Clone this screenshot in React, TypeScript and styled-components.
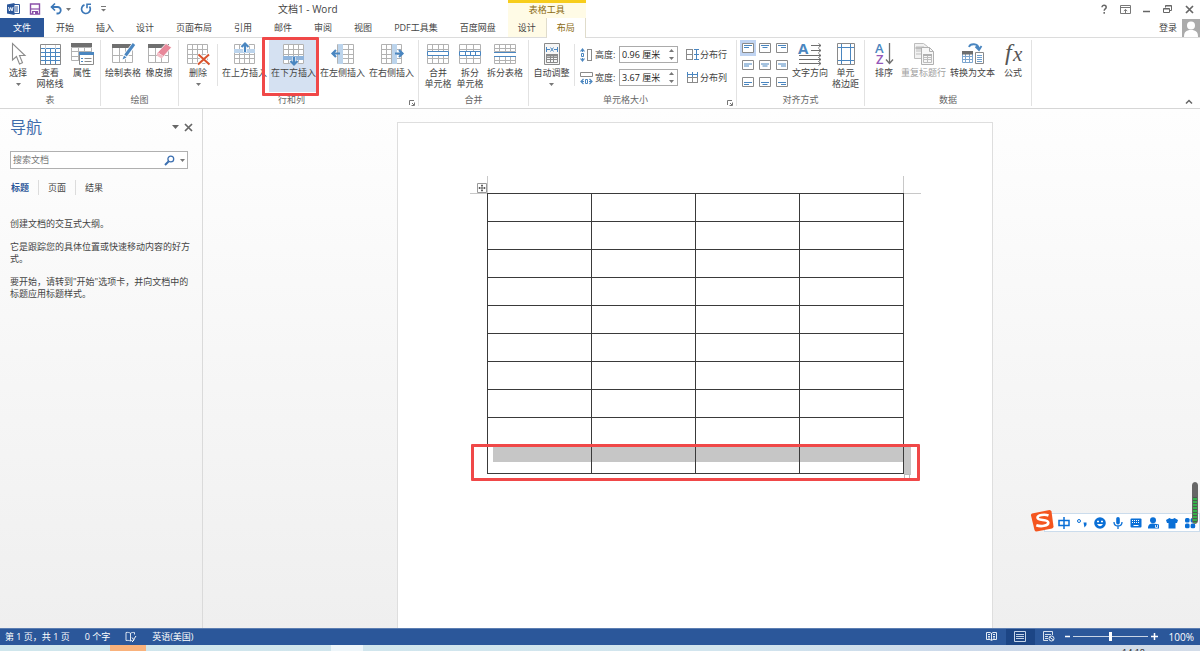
import React from "react";
import styled, { createGlobalStyle, css } from "styled-components";

const GlobalStyle = createGlobalStyle`
  *, *::before, *::after { box-sizing: border-box; }
  html, body { margin: 0; padding: 0; }
  body {
    font-family: "Open Sans", "Noto Sans CJK SC", sans-serif;
    font-size: 9px;
    line-height: 12px;
    color: #444;
    background: #fff;
  }
  button, input { font: inherit; color: inherit; padding: 0; margin: 0; border: 0; background: none; border-radius: 0; }
  svg { display: block; flex: none; overflow: visible; }
  a { color: inherit; text-decoration: none; }
`;

const GREY = "#8a8a8a";
const DARK = "#6f6f6f";
const BLUE = "#4a86c0";
const PALE = "#bcd4ec";

/* ---------- shell ---------- */
const Shell = styled.div`
  display: flex;
  flex-direction: column;
  height: 100vh;
  overflow: hidden;
  position: relative;
`;

const Header = styled.header`
  display: flex;
  height: 37px;
  flex: none;
`;
const HeaderColumn = styled.div<{ $grow?: boolean }>`
  display: flex;
  flex-direction: column;
  flex: ${(p) => (p.$grow ? "1" : "none")};
`;
const TitleRow = styled.div`
  display: flex;
  align-items: center;
  height: 18px;
`;
const QuickAccess = styled.div`
  display: flex;
  align-items: center;
  gap: 9px;
  padding-left: 7px;
`;
const IconButton = styled.button`
  display: flex;
  align-items: center;
  gap: 4px;
`;
const DocTitle = styled.h1`
  margin: 0 0 0 172px;
  font-size: 10px;
  font-weight: 400;
  line-height: 16px;
  white-space: nowrap;
`;
const TabRow = styled.nav`
  display: flex;
  height: 19px;
`;
const Tab = styled.button<{ $kind?: "file" | "active" | "context" }>`
  padding: 0 11px;
  line-height: 18px;
  white-space: nowrap;
  ${(p) => p.$kind === "file" && css`width: 44px; margin-right: 1px; background: #2b579a; color: #fff;`}
  ${(p) => p.$kind === "context" && css`flex: 1; padding: 0;`}
  ${(p) =>
    p.$kind === "active" &&
    css`
      flex: 1;
      padding: 0;
      height: 20px;
      position: relative;
      background: #fff;
      border: 1px solid #e0dccb;
      border-top: 0;
      border-bottom: 0;
      color: #8a6a12;
    `}
`;
const ContextTabs = styled(HeaderColumn)`
  width: 78px;
  margin-left: 1px;
  background: #fffbe6;
  border-top: 3px solid #f7cd1c;
`;
const ContextTitle = styled.div`
  height: 15px;
  line-height: 13px;
  text-align: center;
  color: #8a6a12;
`;
const WindowControls = styled(TitleRow)`
  justify-content: flex-end;
  gap: 11px;
  padding-right: 6px;
`;
const Account = styled.div`
  display: flex;
  justify-content: flex-end;
  align-items: center;
  gap: 5px;
  height: 19px;
`;

/* ---------- ribbon ---------- */
const Ribbon = styled.section`
  display: flex;
  flex: none;
  height: 72px;
  border-top: 1px solid #dcdcdc;
  border-bottom: 1px solid #d6d6d6;
  padding: 2px 0;
`;
const Group = styled.div<{ $w: number }>`
  display: flex;
  flex-direction: column;
  flex: none;
  width: ${(p) => p.$w}px;
  height: 66px;
  border-right: 1px solid #e2e2e2;
  position: relative;
`;
const GroupBody = styled.div<{ $pad?: number }>`
  display: flex;
  height: 52px;
  padding-left: ${(p) => p.$pad ?? 0}px;
`;
const GroupLabel = styled.div<{ $launch?: boolean }>`
  margin-top: 2px;
  padding-right: ${(p) => (p.$launch ? 14 : 0)}px;
  text-align: center;
  color: #666;
`;
const Launcher = styled.button`
  position: absolute;
  right: 3px;
  bottom: 0;
`;
const Command = styled.button<{ $w: number; $hot?: boolean; $off?: boolean }>`
  display: flex;
  flex-direction: column;
  align-items: center;
  flex: none;
  width: ${(p) => p.$w}px;
  height: 52px;
  padding-top: 2px;
  line-height: 11px;
  white-space: nowrap;
  position: relative;
  background: ${(p) => (p.$hot ? "#d5e1f2" : "transparent")};
  color: ${(p) => (p.$off ? "#a0a0a0" : "#444")};
`;
const CommandText = styled.span`
  margin-top: 1px;
  white-space: pre;
`;
const MenuCaret = styled.span`
  margin-top: 5px;
`;
const Divider = styled.span`
  flex: none;
  width: 1px;
  height: 42px;
  margin: 4px 2px 0 1px;
  background: #e2e2e2;
`;
const Callout = styled.div`
  position: absolute;
  border: 3px solid #f04848;
  border-radius: 1px;
  pointer-events: none;
  z-index: 3;
`;
const CommandCallout = styled(Callout)`
  inset: -3px -1px -4px -7px;
`;

const FieldStack = styled.div`
  display: flex;
  flex-direction: column;
  gap: 6px;
  padding: 6px 0 0 3px;
`;
const Field = styled.div`
  display: flex;
  align-items: center;
  gap: 2px;
  height: 17px;
`;
const FieldLabel = styled.label`
  width: 22px;
  white-space: nowrap;
`;
const Spinner = styled.div`
  display: flex;
  align-items: center;
  width: 59px;
  height: 17px;
  border: 1px solid #ababab;
`;
const SizeInput = styled.input`
  flex: 1;
  min-width: 0;
  padding-left: 2px;
  color: #222;
  outline: 0;
`;
const SpinButtons = styled.div`
  display: flex;
  flex-direction: column;
  gap: 5px;
  width: 11px;
  align-items: center;
`;
const Distribute = styled.button`
  display: flex;
  align-items: center;
  gap: 1px;
  height: 17px;
  white-space: nowrap;
`;
const AlignGrid = styled.div`
  display: grid;
  grid-template-columns: repeat(3, 16px);
  grid-auto-rows: 16px;
  gap: 1px;
  margin-right: 1px;
`;
const AlignButton = styled.button<{ $on: boolean }>`
  display: flex;
  align-items: center;
  justify-content: center;
  background: ${(p) => (p.$on ? "#c0d4f2" : "transparent")};
`;
const Collapse = styled.button`
  margin: auto 7px 2px auto;
`;

/* ---------- workspace ---------- */
const Workspace = styled.main`
  display: flex;
  flex: 1;
  min-height: 0;
  overflow: hidden;
  background: linear-gradient(#fefefe, #efefef);
`;
const NavPane = styled.aside`
  flex: none;
  width: 203px;
  padding: 8px 14px 0 10px;
  border-right: 1px solid #dadada;
`;
const NavHead = styled.div`
  display: flex;
  align-items: center;
  gap: 5px;
  height: 20px;
  margin-right: -5px;
`;
const NavTitle = styled.h2`
  flex: 1;
  margin: 0;
  font-size: 16px;
  font-weight: 400;
  line-height: 22px;
  color: #3f6cab;
`;
const SearchBox = styled.div`
  display: flex;
  align-items: center;
  gap: 5px;
  height: 18px;
  margin-top: 14px;
  padding-right: 2px;
  border: 1px solid #b0b0b0;
  background: #fff;
`;
const SearchInput = styled.input`
  flex: 1;
  min-width: 0;
  padding-left: 2px;
  outline: 0;
  &::placeholder { color: #777; opacity: 1; }
`;
const NavTabs = styled.div`
  display: flex;
  height: 15px;
  margin-top: 11px;
`;
const NavTab = styled.button<{ $on?: boolean }>`
  padding: 0 9px;
  border-right: 1px solid #dcdcdc;
  color: ${(p) => (p.$on ? "#2b579a" : "#444")};
  font-weight: ${(p) => (p.$on ? 700 : 400)};
  &:first-child { padding-left: 1px; }
  &:last-child { border-right: 0; }
`;
const NavText = styled.div`
  display: flex;
  flex-direction: column;
  gap: 11px;
  margin: 23px -4px 0 0;
  p { margin: 0; }
`;
const Canvas = styled.div`
  display: flex;
  flex: 1;
  justify-content: center;
  padding: 13px 13px 0 0;
`;
const Paper = styled.article`
  width: 596px;
  padding: 70px 88px 0 89px;
  background: #fff;
  border: 1px solid #dedede;
  border-bottom: 0;
`;
const TableFrame = styled.div`
  position: relative;
`;
const DocTable = styled.table`
  position: relative;
  z-index: 1;
  width: 100%;
  table-layout: fixed;
  border-collapse: collapse;
  td { height: 28px; padding: 0; border: 1px solid #3a3a3a; }
`;
const CropMark = styled.span<{ $right?: boolean }>`
  position: absolute;
  top: -17px;
  width: 18px;
  height: 18px;
  border-bottom: 1px solid #c8c8c8;
  ${(p) =>
    p.$right
      ? css`right: -17px; border-left: 1px solid #c8c8c8;`
      : css`left: -17px; border-right: 1px solid #c8c8c8;`}
`;
const MoveHandle = styled.span`
  position: absolute;
  left: -10px;
  top: -10px;
`;
const RowSelection = styled.span`
  position: absolute;
  left: 6px;
  right: 0;
  bottom: 12px;
  height: 16px;
  background: #c6c6c6;
`;
const RowEndMark = styled.span`
  position: absolute;
  right: -7px;
  bottom: -1px;
  width: 7px;
  height: 29px;
  background: #c6c6c6;
`;
const ResizeHandle = styled.span`
  position: absolute;
  right: -6px;
  bottom: -6px;
  width: 6px;
  height: 6px;
  border: 1px solid #bbb;
  background: #fff;
`;
const RowCallout = styled(Callout)`
  left: -16px;
  right: -16px;
  bottom: -7px;
  height: 37px;
`;

/* ---------- status bar and taskbar ---------- */
const StatusBar = styled.footer`
  display: flex;
  align-items: center;
  flex: none;
  height: 17px;
  padding: 0 6px 1px 5px;
  background: #2b579a;
  border-top: 1px solid #5c7eb2;
  color: #fff;
  white-space: nowrap;
`;
const StatusItems = styled.div`
  display: flex;
  align-items: center;
  gap: 15px;
  flex: 1;
`;
const ViewButton = styled.button<{ $on?: boolean }>`
  display: flex;
  align-items: center;
  justify-content: center;
  width: 29px;
  height: 16px;
  background: ${(p) => (p.$on ? "#1c4585" : "transparent")};
`;
const ZoomControl = styled.div`
  display: flex;
  align-items: center;
  gap: 3px;
  margin-left: 1px;
`;
const ZoomSlider = styled.input`
  appearance: none;
  width: 75px;
  height: 9px;
  &::-webkit-slider-runnable-track { height: 1px; background: #c9d5e6; }
  &::-webkit-slider-thumb { appearance: none; width: 3px; height: 9px; margin-top: -4px; background: #fff; border: 0; }
`;
const ZoomValue = styled.span`
  margin-left: 8px;
  font-size: 10px;
`;
const Taskbar = styled.div`
  display: flex;
  flex: none;
  height: 6px;
  overflow: hidden;
  background: linear-gradient(90deg, #cfe6ec, #d2e5ee 60%, #ccd9ea 80%, #d3dce8);
`;
const TaskItem = styled.span<{ $hot?: boolean }>`
  flex: none;
  width: ${(p) => (p.$hot ? 36 : 32)}px;
  margin-left: ${(p) => (p.$hot ? 110 : 185)}px;
  background: ${(p) => (p.$hot ? "#f9b27c" : "#eef6fa")};
`;
const Clock = styled.time`
  margin: 2px 55px 0 auto;
  font-size: 9px;
  line-height: 12px;
  color: #222;
`;

/* ---------- floating input bar ---------- */
const InputBar = styled.div`
  position: absolute;
  right: 0;
  bottom: 119px;
  display: flex;
  align-items: center;
  gap: 6px;
  width: 156px;
  height: 19px;
  padding-left: 13px;
  background: #fff;
  border: 1px solid #cbdcec;
  z-index: 4;
`;
const InputLogo = styled.span`
  position: absolute;
  left: -15px;
  top: -5px;
`;
const Meter = styled.div`
  position: absolute;
  right: 2px;
  bottom: 127px;
  width: 6px;
  height: 42px;
  border-radius: 3px;
  background: linear-gradient(#666 14px, transparent 14px), repeating-linear-gradient(#35b04a 0 2px, #4a5a4d 2px 3px);
  border: 1px solid #666;
  z-index: 5;
`;

/* ---------- icons ---------- */
function Svg({ w = 24, h = 24, children }: { w?: number; h?: number; children: React.ReactNode }) {
  return (
    <svg width={w} height={h} viewBox={`0 0 ${w} ${h}`} fill="none" aria-hidden="true">
      {children}
    </svg>
  );
}
function Lattice({ x, y, w, h, c, r, s = "#b2b2b2" }: { x: number; y: number; w: number; h: number; c: number; r: number; s?: string }) {
  let d = `M${x} ${y}h${w}v${h}h${-w}z`;
  for (let i = 1; i < c; i++) d += `M${x + Math.round((i * w) / c)} ${y}v${h}`;
  for (let i = 1; i < r; i++) d += `M${x} ${y + Math.round((i * h) / r)}h${w}`;
  return <path d={d} stroke={s} />;
}
const Caret = () => (
  <Svg w={5} h={3}><path d="M0 0h5L2.500 3z" fill="#777" /></Svg>
);
const WordIcon = () => (
  <Svg w={13} h={12}>
    <path d="M6.500 1.500h6v9h-6z" fill="#fff" stroke="#2b579a" />
    <path d="M8 4h3M8 6h3M8 8h3" stroke="#2b579a" />
    <path d="M0 1.500L7.500 0v12L0 10.500z" fill="#2b579a" />
    <path d="M1.500 4l1 4 1.200-3.500L5 8l1-4" stroke="#fff" strokeWidth=".9" />
  </Svg>
);
const SaveIcon = () => (
  <Svg w={12} h={12}>
    <path d="M1.500 1h9v10h-9z" stroke="#8a50a8" strokeWidth="1.400" />
    <path d="M1 6h10" stroke="#8a50a8" strokeWidth="1.200" />
    <path d="M3 8h6v3H3z" fill="#8a50a8" />
    <path d="M4.500 9H6v2H4.500z" fill="#fff" />
  </Svg>
);
const UndoIcon = () => (
  <Svg w={12} h={12}>
    <path d="M1.500 4h6a3 3 0 0 1 0 6.500H6.500" stroke="#3c78b8" strokeWidth="1.800" />
    <path d="M5 .5L1.500 4 5 7.500" stroke="#3c78b8" strokeWidth="1.700" />
  </Svg>
);
const RedoIcon = () => (
  <Svg w={12} h={12}>
    <path d="M4.500 1.900A4.400 4.400 0 1 0 9.500 3.500" stroke="#3c78b8" strokeWidth="1.700" />
    <path d="M11 1.200H7v4" stroke="#3c78b8" strokeWidth="1.600" />
  </Svg>
);
const MoreIcon = () => (
  <Svg w={5} h={6}><path d="M0 .5h5" stroke="#777" /><path d="M0 3h5L2.500 5.500z" fill="#777" /></Svg>
);
const SelectIcon = () => (
  <Svg><path d="M6.500 1.500v16.500l4-3.500 3 7.500 3-1.300-3-7.200h5.500z" fill="#fff" stroke="#8c8c8c" strokeWidth="1.100" /></Svg>
);
const GridlinesIcon = () => (
  <Svg>
    <Lattice x={2.5} y={6.5} w={20} h={16} c={4} r={4} s="#4a86c0" />
    <path d="M7.500 2v5M17.500 2v5" stroke="#d0d0d0" />
    <path d="M2.500 22.500v-20h20v20z" stroke={GREY} />
  </Svg>
);
const PropertiesIcon = () => (
  <Svg>
    <Lattice x={1.5} y={5.5} w={20} h={13} c={3} r={3} />
    <path d="M1 1h21v4H1z" fill={DARK} />
    <path d="M9.500 10.500h14v12h-14z" fill="#fff" stroke={GREY} />
    <path d="M9 10h15v3H9z" fill={BLUE} />
    <path d="M11 16.500h2M11 19.500h2" stroke={BLUE} /><path d="M14.500 16.500h7M14.500 19.500h7" stroke={GREY} />
  </Svg>
);
const DrawTableIcon = () => (
  <Svg>
    <Lattice x={1.5} y={5.5} w={20} h={15} c={3} r={2} />
    <path d="M1 2h21v4H1z" fill={DARK} />
    <path d="M10 19l2-6L21 1l4 3-10 13z" fill="#fff" />
    <path d="M11.500 17.500l1.500-4 2.500 2z" fill={BLUE} />
    <path d="M14.500 13.500L23 2" stroke={BLUE} strokeWidth="3" />
  </Svg>
);
const EraserIcon = () => (
  <Svg>
    <Lattice x={1.5} y={5.5} w={20} h={15} c={3} r={2} />
    <path d="M1 2h21v4H1z" fill={DARK} />
    <path d="M10.500 10.500L19 1.500l5.500 4-8 9z" fill="#e8889a" stroke="#fff" strokeWidth=".8" />
    <path d="M10.500 10.500l6 4-2 2-5-3z" fill="#f3bcc5" />
  </Svg>
);
const DeleteIcon = () => (
  <Svg>
    <Lattice x={1.5} y={2.5} w={20} h={19} c={4} r={4} />
    <path d="M12.500 12.500l11 10M23 12.500l-11 10" stroke="#fff" strokeWidth="4" />
    <path d="M12.500 12.500l11 10M23 12.500l-11 10" stroke="#d9532c" strokeWidth="2" />
  </Svg>
);
const InsertAboveIcon = () => (
  <Svg>
    <Lattice x={1.5} y={2.5} w={20} h={19} c={4} r={4} />
    <path d="M1 7h21v4H1z" fill={PALE} />
    <path d="M12 10V2M8.500 5L12 1.500 15.500 5" stroke="#fff" strokeWidth="4" />
    <path d="M12 10V2M8.500 5L12 1.500 15.500 5" stroke={BLUE} strokeWidth="2.200" />
  </Svg>
);
const InsertBelowIcon = () => (
  <Svg>
    <path d="M1 2h21v20H1z" fill="#fff" />
    <Lattice x={1.5} y={2.5} w={20} h={19} c={4} r={4} />
    <path d="M1 14h21v4H1z" fill="#8fb4dc" />
    <path d="M12 15v7M8.500 19L12 22.500 15.500 19" stroke="#d5e1f2" strokeWidth="4" />
    <path d="M12 15v7M8.500 19L12 22.500 15.500 19" stroke={BLUE} strokeWidth="2.200" />
  </Svg>
);
const InsertLeftIcon = () => (
  <Svg>
    <Lattice x={6.5} y={2.5} w={16} h={19} c={3} r={4} />
    <path d="M7 2h5v20H7z" fill={PALE} />
    <path d="M9 11.500H2M5 8l-3.500 3.500L5 15" stroke={BLUE} strokeWidth="2.200" />
  </Svg>
);
const InsertRightIcon = () => (
  <Svg>
    <Lattice x={1.5} y={2.5} w={20} h={19} c={4} r={4} />
    <path d="M12 2h5v20h-5z" fill={PALE} />
    <path d="M15 11.500h7M19 8l3.500 3.500L19 15" stroke={BLUE} strokeWidth="2.200" />
  </Svg>
);
const MergeIcon = () => (
  <Svg>
    <Lattice x={1.5} y={2.5} w={21} h={19} c={4} r={4} />
    <path d="M1.500 9.500h21v4h-21z" fill="#fff" stroke={BLUE} />
  </Svg>
);
const SplitIcon = () => (
  <Svg>
    <Lattice x={1.5} y={2.5} w={21} h={19} c={3} r={4} />
    <path d="M1.500 9.500h21v4h-21z" fill="#fff" stroke={BLUE} />
    <path d="M7.500 10v3M12.500 10v3M17.500 10v3" stroke={BLUE} />
  </Svg>
);
const SplitTableIcon = () => (
  <Svg>
    <Lattice x={1.5} y={2.5} w={21} h={7} c={4} r={2} />
    <Lattice x={1.5} y={14.5} w={21} h={7} c={4} r={2} />
    <path d="M1 10.500h22M1 14.500h22" stroke={BLUE} />
  </Svg>
);
const AutoFitIcon = () => (
  <Svg>
    <path d="M4.500 1.500h15v21h-15z" stroke={GREY} fill="#f6f6f6" />
    <path d="M6.500 5v5M17.500 5v5M7 7.500h3M14 7.500h3" stroke={BLUE} />
    <path d="M10.500 5.500l3 4M13.500 5.500l-3 4" stroke={BLUE} />
    <Lattice x={6.5} y={12.5} w={11} h={8} c={3} r={3} s={GREY} /><path d="M6 12h12v2.500H6z" fill={GREY} />
  </Svg>
);
const HeightIcon = () => (
  <Svg w={13} h={14}>
    <path d="M2.500 1v3M2.500 10v3M.5 3.500l2-2.500 2 2.500M.5 10.500l2 2.500 2-2.500" stroke={BLUE} strokeWidth="1.200" />
    <path d="M1.500 5.500h2v3h-2z" stroke={BLUE} />
    <path d="M7 1.500h5M7.500 1v12M12 12.500H7M11.500 1v12" stroke={GREY} />
  </Svg>
);
const WidthIcon = () => (
  <Svg w={13} h={14}>
    <path d="M.5 1.500h12v4H.5z" stroke={GREY} />
    <path d="M3.500 8L1 10.500 3.500 13M9.500 8l2.500 2.500L9.500 13M1 10.500h3M9 10.500h3" stroke={BLUE} strokeWidth="1.200" />
    <path d="M5.500 8.500h2v4h-2z" stroke={BLUE} />
  </Svg>
);
const RowsIcon = () => (
  <Svg w={13} h={13}>
    <path d="M.5 1v11M6.500 1v11M.5 1.500h6M.5 6.500h6M.5 11.500h6" stroke={GREY} />
    <path d="M10.500 2v9M8 1.500h5M8 6.500h5M8 11.500h5" stroke={BLUE} />
  </Svg>
);
const ColumnsIcon = () => (
  <Svg w={13} h={13}>
    <path d="M1 6.500h11M1 11.500h11M1.500 6v6M6.500 6v6M11.500 6v6" stroke={GREY} />
    <path d="M1 3.500h11M1.500 1v5M6.500 1v5M11.500 1v5" stroke={BLUE} />
  </Svg>
);
const LauncherIcon = () => (
  <Svg w={6} h={6}><path d="M.5 5V.5H5M3 3l2 2M5.500 2.500v3h-3" stroke="#777" /></Svg>
);
function AlignIcon({ row, col }: { row: number; col: number }) {
  const y = 2.5 + row * 1.5;
  const x = col === 0 ? 2 : col === 1 ? 3.5 : 5;
  return (
    <Svg w={12} h={10}>
      <path d="M.5 .5h11v9H.5z" fill="#fff" stroke={GREY} />
      <path d={`M2 ${y}h8M${x} ${y + 2}h5`} stroke={BLUE} />
    </Svg>
  );
}
const DirectionIcon = () => (
  <Svg w={26}>
    <text x="1" y="12" fontFamily="Open Sans" fontWeight="700" fontSize="15" fill={BLUE}>A</text>
    <path d="M14 3.500h10M14 8.500h10M2 13.500h22M2 17.500h22M2 21.500h22M21.500 1.500l2.500 2-2.500 2M21.500 6.500l2.500 2-2.500 2M21.500 11.500l2.500 2-2.500 2M21.500 15.500l2.500 2-2.500 2M21.500 19.500l2.500 2-2.500 2" stroke={DARK} />
  </Svg>
);
const MarginsIcon = () => (
  <Svg>
    <path d="M3.500 1.500h17v21h-17z" stroke={GREY} />
    <path d="M7.500 2v20M16.500 2v20M4 5.500h16M4 18.500h16" stroke={BLUE} />
  </Svg>
);
const SortIcon = () => (
  <Svg>
    <text x="3" y="11" fontFamily="Open Sans" fontWeight="600" fontSize="13" fill={BLUE}>A</text>
    <text x="4" y="22" fontFamily="Open Sans" fontWeight="600" fontSize="13" fill="#9457b8">Z</text>
    <path d="M17.500 1v20M14 17.500l3.500 4 3.500-4" stroke={DARK} strokeWidth="1.300" />
  </Svg>
);
const RepeatIcon = () => (
  <Svg>
    <path d="M2.500 1.500h9l4 3v12h-13z" fill="#f2f2f2" stroke="#bdbdbd" />
    <path d="M4 5h8v2H4zM4 9h5M4 12h5" fill="#bdbdbd" stroke="#bdbdbd" />
    <path d="M9.500 5.500h8l4 4v13h-12z" fill="#f7f7f7" stroke="#b0b0b0" />
    <path d="M17.500 5.500v4h4" stroke="#b0b0b0" />
    <Lattice x={11.5} y={12.5} w={8} h={8} c={2} r={3} s="#bdbdbd" /><path d="M11 12h9v2h-9z" fill="#b0b0b0" />
  </Svg>
);
const ConvertIcon = () => (
  <Svg>
    <Lattice x={1.5} y={11.5} w={10} h={9} c={3} r={3} s="#7ea6cf" />
    <path d="M1 9h11v3.500H1z" fill={DARK} />
    <path d="M14.500 10.500h8v11h-8z" fill="#fff" stroke={GREY} />
    <path d="M16 13.500h5M16 15.500h5M16 17.500h5M16 19.500h5" stroke={BLUE} strokeWidth=".8" />
    <path d="M8 5c1-3.500 9-4.500 10 2M14.500 4.500L18 8l2.500-4" stroke={BLUE} strokeWidth="1.800" />
  </Svg>
);
const FormulaIcon = () => (
  <Svg>
    <text x="4" y="18" fontFamily="Liberation Serif" fontStyle="italic" fontSize="24" fill="#555">f</text>
    <text x="12" y="19" fontFamily="Liberation Serif" fontStyle="italic" fontSize="21" fill="#555">x</text>
  </Svg>
);
const AvatarIcon = () => (
  <Svg w={18} h={18}>
    <path d="M0 0h18v18H0z" fill="#ababab" />
    <circle cx="9" cy="6.500" r="4" fill="#fff" />
    <path d="M2 18c0-5 2-7 7-7s7 2 7 7z" fill="#fff" />
  </Svg>
);
const SearchIcon = () => (
  <Svg w={11} h={11}>
    <circle cx="6.800" cy="4" r="2.900" stroke="#3c6fb0" strokeWidth="1.300" />
    <path d="M4.500 6.500L1 10" stroke="#3c6fb0" strokeWidth="2" />
  </Svg>
);
const CloseIcon = () => (
  <Svg w={9} h={9}><path d="M1 1l7 7M8 1L1 8" stroke="#666" strokeWidth="1.700" /></Svg>
);
const ProofIcon = () => (
  <Svg w={12} h={12}>
    <path d="M5.500 2v8C4 9.300 2.500 9.300 1 9.500v-8c2-.3 3.500 0 4.500.8 1-.8 2.500-1 4-.8v2M5.500 10c.8-.5 1.500-.7 2-.7" stroke="#dde6f2" />
    <path d="M7 6.500l1.500 2L11 5M7 11l2.500-2.500" stroke="#fff" />
  </Svg>
);
const ReadIcon = () => (
  <Svg w={11} h={11}>
    <path d="M.5 1.500h3.500l1.500 1 1.500-1h3.500v7H7l-1.500 1-1.500-1H.5zM5.500 2v7M2 3.500h2M2 5.500h2M2 7h2M7 3.500h2M7 5.500h2M7 7h2" stroke="#e3ebf5" />
  </Svg>
);
const PrintIcon = () => (
  <Svg w={12} h={11}><path d="M.5 .5h11v10H.5zM2 3.500h8M2 5.500h8M2 7.500h8" stroke="#c5d4e8" /></Svg>
);
const WebIcon = () => (
  <Svg w={12} h={11}>
    <path d="M5 9.500H.5v-9h9V4M2 3.500h6M2 5.500h3M2 7.500h3" stroke="#d4dfed" />
    <circle cx="8.500" cy="7.500" r="2.500" stroke="#e8eff7" /><path d="M6.500 6l4 3" stroke="#e8eff7" />
  </Svg>
);
const SogouLogo = () => (
  <Svg w={25} h={24}>
    <path d="M2 4.500L19.500 1q1.500 0 2 1.500l2 15q0 1.500-1.500 2L6.500 22.500q-1.500 0-2-1.500L1 6.500q-.3-1.500 1-2z" fill="#f4551f" />
    <path d="M18.500 6.500c-4-1.500-11-.5-11 2.200 0 3.300 10.500 1.300 10.800 4.800.2 3.500-7.500 4.500-12 2.700" stroke="#fff" strokeWidth="2.600" />
  </Svg>
);

const IB = "#0a6fd6";
const inputIcons: [string, React.ReactNode][] = [
  ["中文", <path key="a" d="M1 3.500h10v5H1zM6 0v12" stroke={IB} strokeWidth="1.500" />],
  ["标点", <g key="b"><circle cx="3" cy="4" r="1.500" stroke={IB} /><path d="M7.500 5.500h3V8L8.500 10.500" fill={IB} /></g>],
  ["表情", <g key="c"><circle cx="6" cy="6" r="5.800" fill={IB} /><path d="M3 4.500h2M7 4.500h2" stroke="#fff" strokeWidth="1.500" /><path d="M3 7q3 4.500 6 0z" fill="#fff" /></g>],
  ["语音", <g key="d"><rect x="4.200" y="0" width="3.600" height="7.500" rx="1.800" fill={IB} /><path d="M2 5q0 4 4 4t4-4M6 9v3" stroke={IB} strokeWidth="1.300" /></g>],
  ["键盘", <g key="e"><rect x=".5" y="1.500" width="11" height="9" rx="1" fill={IB} /><path d="M2 3.500h8M2 5.500h8" stroke="#fff" strokeDasharray="1 1" /><path d="M3.500 8.500h5" stroke="#fff" /></g>],
  ["用户", <g key="f"><circle cx="5" cy="3.200" r="3" fill={IB} /><path d="M0 11.500C0 7.500 2 6.500 5 6.500s4 1 6 1v4z" fill={IB} /><path d="M7.500 8v2.500h2V8" stroke="#fff" strokeWidth=".8" /></g>],
  ["皮肤", <path key="g" d="M3.500 1q2.500 2 5 0L12 3l-1 3H9.500v5.500h-7V6H1L0 3z" fill={IB} />],
  ["工具", <g key="h" fill={IB}><rect x="1" y="1" width="4.600" height="4.600" rx="1.500" /><rect x="6.600" y="1" width="4.600" height="4.600" rx="1.500" /><rect x="1" y="6.600" width="4.600" height="4.600" rx="1.500" /><rect x="6.600" y="6.600" width="4.600" height="4.600" rx="1.500" /></g>],
];

/* ---------- ribbon parts ---------- */
type CmdProps = { w: number; icon: React.ReactNode; text: string; menu?: boolean; hot?: boolean; off?: boolean; children?: React.ReactNode };
function Cmd({ w, icon, text, menu, hot, off, children }: CmdProps) {
  return (
    <Command type="button" $w={w} $hot={hot} $off={off} aria-disabled={off}>
      {icon}
      <CommandText>{text}</CommandText>
      {menu && <MenuCaret><Caret /></MenuCaret>}
      {children}
    </Command>
  );
}
const LaunchButton = ({ name }: { name: string }) => (
  <Launcher type="button" aria-label={name}><LauncherIcon /></Launcher>
);
function SizeField({ id, label, value, icon }: { id: string; label: string; value: string; icon: React.ReactNode }) {
  return (
    <Field>
      {icon}
      <FieldLabel htmlFor={id}>{label}</FieldLabel>
      <Spinner>
        <SizeInput id={id} type="text" defaultValue={value} />
        <SpinButtons>
          <button type="button" aria-label="增加"><Svg w={5} h={3}><path d="M0 3h5L2.500 0z" fill="#777" /></Svg></button>
          <button type="button" aria-label="减少"><Caret /></button>
        </SpinButtons>
      </Spinner>
    </Field>
  );
}

const mainTabs = ["开始", "插入", "设计", "页面布局", "引用", "邮件", "审阅", "视图", "PDF工具集", "百度网盘"];

export default function App() {
  return (
    <Shell lang="zh-CN">
      <GlobalStyle />
      <Header>
        <HeaderColumn>
          <TitleRow>
            <QuickAccess>
              <WordIcon />
              <IconButton type="button" aria-label="保存"><SaveIcon /></IconButton>
              <IconButton type="button" aria-label="撤消"><UndoIcon /><Caret /></IconButton>
              <IconButton type="button" aria-label="恢复"><RedoIcon /></IconButton>
              <IconButton type="button" aria-label="自定义"><MoreIcon /></IconButton>
            </QuickAccess>
            <DocTitle>文档1 - Word</DocTitle>
          </TitleRow>
          <TabRow>
            <Tab type="button" $kind="file">文件</Tab>
            {mainTabs.map((t) => <Tab type="button" key={t}>{t}</Tab>)}
          </TabRow>
        </HeaderColumn>
        <ContextTabs>
          <ContextTitle>表格工具</ContextTitle>
          <TabRow>
            <Tab type="button" $kind="context">设计</Tab>
            <Tab type="button" $kind="active">布局</Tab>
          </TabRow>
        </ContextTabs>
        <HeaderColumn $grow>
          <WindowControls>
            <IconButton type="button" aria-label="帮助"><Svg w={10} h={10}><path d="M3 3.200C3 .5 7.200.700 7.200 3.200 7.200 5 5.200 4.800 5.200 6.700M5.200 8v1.800" stroke="#666" strokeWidth="1.500" /></Svg></IconButton>
            <IconButton type="button" aria-label="功能区显示选项"><Svg w={11} h={9}><path d="M.5 .5h10v8H.5zM1 2.500h9M5.500 8V4.500M3.800 6l1.700-1.500L7.200 6" stroke="#777" /></Svg></IconButton>
            <IconButton type="button" aria-label="最小化"><Svg w={10} h={9}><path d="M1 6.500h7" stroke="#666" strokeWidth="1.500" /></Svg></IconButton>
            <IconButton type="button" aria-label="还原"><Svg w={11} h={9}><path d="M2.500 2.500v-2h6v5h-2M.5 3.500h6v4h-6zM2.500 1h6M.5 4h6" stroke="#666" /></Svg></IconButton>
            <IconButton type="button" aria-label="关闭"><CloseIcon /></IconButton>
          </WindowControls>
          <Account><a href="#login">登录</a><AvatarIcon /></Account>
        </HeaderColumn>
      </Header>

      <Ribbon>
        <Group $w={101}>
          <GroupBody $pad={2}>
            <Cmd w={32} icon={<SelectIcon />} text="选择" menu />
            <Cmd w={32} icon={<GridlinesIcon />} text={"查看\n网格线"} />
            <Cmd w={32} icon={<PropertiesIcon />} text="属性" />
          </GroupBody>
          <GroupLabel>表</GroupLabel>
        </Group>
        <Group $w={78}>
          <GroupBody $pad={3}>
            <Cmd w={38} icon={<DrawTableIcon />} text="绘制表格" />
            <Cmd w={34} icon={<EraserIcon />} text="橡皮擦" />
          </GroupBody>
          <GroupLabel>绘图</GroupLabel>
        </Group>
        <Group $w={240}>
          <GroupBody $pad={1}>
            <Cmd w={36} icon={<DeleteIcon />} text="删除" menu />
            <Divider />
            <Cmd w={49} icon={<InsertAboveIcon />} text="在上方插入" />
            <Cmd w={49} icon={<InsertBelowIcon />} text="在下方插入" hot><CommandCallout /></Cmd>
            <Cmd w={49} icon={<InsertLeftIcon />} text="在左侧插入" />
            <Cmd w={49} icon={<InsertRightIcon />} text="在右侧插入" />
          </GroupBody>
          <GroupLabel $launch>行和列</GroupLabel>
          <LaunchButton name="行和列选项" />
        </Group>
        <Group $w={110}>
          <GroupBody $pad={3}>
            <Cmd w={32} icon={<MergeIcon />} text={"合并\n单元格"} />
            <Cmd w={32} icon={<SplitIcon />} text={"拆分\n单元格"} />
            <Cmd w={38} icon={<SplitTableIcon />} text="拆分表格" />
          </GroupBody>
          <GroupLabel>合并</GroupLabel>
        </Group>
        <Group $w={208}>
          <GroupBody $pad={1}>
            <Cmd w={43} icon={<AutoFitIcon />} text="自动调整" menu />
            <Divider />
            <FieldStack>
              <SizeField id="row-height" label="高度:" value="0.96 厘米" icon={<HeightIcon />} />
              <SizeField id="col-width" label="宽度:" value="3.67 厘米" icon={<WidthIcon />} />
            </FieldStack>
            <FieldStack>
              <Distribute type="button"><DistributeIcon><RowsIcon /></DistributeIcon>分布行</Distribute>
              <Distribute type="button"><DistributeIcon><ColumnsIcon /></DistributeIcon>分布列</Distribute>
            </FieldStack>
          </GroupBody>
          <GroupLabel $launch>单元格大小</GroupLabel>
          <LaunchButton name="单元格大小选项" />
        </Group>
        <Group $w={128}>
          <GroupBody $pad={3}>
            <AlignGrid>
              {[0, 1, 2].map((r) =>
                [0, 1, 2].map((c) => (
                  <AlignButton type="button" key={`${r}${c}`} $on={r === 0 && c === 0} aria-label={`对齐 ${r + 1}-${c + 1}`}>
                    <AlignIcon row={r} col={c} />
                  </AlignButton>
                ))
              )}
            </AlignGrid>
            <Cmd w={38} icon={<DirectionIcon />} text="文字方向" />
            <Cmd w={33} icon={<MarginsIcon />} text={"单元\n格边距"} />
          </GroupBody>
          <GroupLabel>对齐方式</GroupLabel>
        </Group>
        <Group $w={167}>
          <GroupBody $pad={4}>
            <Cmd w={30} icon={<SortIcon />} text="排序" />
            <Cmd w={49} icon={<RepeatIcon />} text="重复标题行" off />
            <Cmd w={49} icon={<ConvertIcon />} text="转换为文本" />
            <Cmd w={32} icon={<FormulaIcon />} text="公式" />
          </GroupBody>
          <GroupLabel>数据</GroupLabel>
        </Group>
        <Collapse type="button" aria-label="折叠功能区"><Svg w={8} h={5}><path d="M1 4.500l3-3 3 3" stroke="#666" strokeWidth="1.500" /></Svg></Collapse>
      </Ribbon>

      <Workspace>
        <NavPane>
          <NavHead>
            <NavTitle>导航</NavTitle>
            <IconButton type="button" aria-label="选项"><Svg w={7} h={4}><path d="M0 0h7L3.500 4z" fill="#666" /></Svg></IconButton>
            <IconButton type="button" aria-label="关闭导航"><CloseIcon /></IconButton>
          </NavHead>
          <SearchBox>
            <SearchInput type="text" aria-label="搜索文档" placeholder="搜索文档" />
            <IconButton type="button" aria-label="搜索"><SearchIcon /></IconButton>
            <IconButton type="button" aria-label="搜索选项"><Caret /></IconButton>
          </SearchBox>
          <NavTabs>
            <NavTab type="button" $on>标题</NavTab>
            <NavTab type="button">页面</NavTab>
            <NavTab type="button">结果</NavTab>
          </NavTabs>
          <NavText>
            <p>创建文档的交互式大纲。</p>
            <p>它是跟踪您的具体位置或快速移动内容的好方式。</p>
            <p>要开始，请转到"开始"选项卡，并向文档中的标题应用标题样式。</p>
          </NavText>
        </NavPane>
        <Canvas>
          <Paper>
            <TableFrame>
              <CropMark />
              <CropMark $right />
              <MoveHandle>
                <Svg w={10} h={10}>
                  <path d="M.5 .5h9v9h-9z" fill="#fff" stroke="#999" />
                  <path d="M5 1.500v7M1.500 5h7M4 2.500h2M4 7.500h2M2.500 4v2M7.500 4v2" stroke="#555" strokeWidth=".9" />
                </Svg>
              </MoveHandle>
              <RowSelection />
              <RowEndMark />
              <ResizeHandle />
              <DocTable>
                <tbody>
                  {Array.from({ length: 10 }, (_, r) => (
                    <tr key={r}>{[0, 1, 2, 3].map((c) => <td key={c} />)}</tr>
                  ))}
                </tbody>
              </DocTable>
              <RowCallout />
            </TableFrame>
          </Paper>
        </Canvas>
      </Workspace>

      <StatusBar>
        <StatusItems>
          <span>第 1 页，共 1 页</span>
          <span>0 个字</span>
          <ProofIcon />
          <span>英语(美国)</span>
        </StatusItems>
        <ViewButton type="button" aria-label="阅读视图"><ReadIcon /></ViewButton>
        <ViewButton type="button" aria-label="页面视图" $on><PrintIcon /></ViewButton>
        <ViewButton type="button" aria-label="Web 版式视图"><WebIcon /></ViewButton>
        <ZoomControl>
          <IconButton type="button" aria-label="缩小"><Svg w={5} h={7}><path d="M0 3.500h5" stroke="#fff" strokeWidth="1.500" /></Svg></IconButton>
          <ZoomSlider type="range" aria-label="缩放" defaultValue={50} />
          <IconButton type="button" aria-label="放大"><Svg w={7} h={7}><path d="M0 3.500h7M3.500 0v7" stroke="#fff" strokeWidth="1.500" /></Svg></IconButton>
          <ZoomValue>100%</ZoomValue>
        </ZoomControl>
      </StatusBar>
      <Taskbar>
        <TaskItem $hot />
        <TaskItem />
        <Clock>14:18</Clock>
      </Taskbar>

      <Meter />
      <InputBar>
        <InputLogo><SogouLogo /></InputLogo>
        {inputIcons.map(([name, art]) => (
          <IconButton type="button" key={name} aria-label={name}><Svg w={12} h={12}>{art}</Svg></IconButton>
        ))}
      </InputBar>
    </Shell>
  );
}

const DistributeIcon = styled.span`
  margin-left: 5px;
`;
